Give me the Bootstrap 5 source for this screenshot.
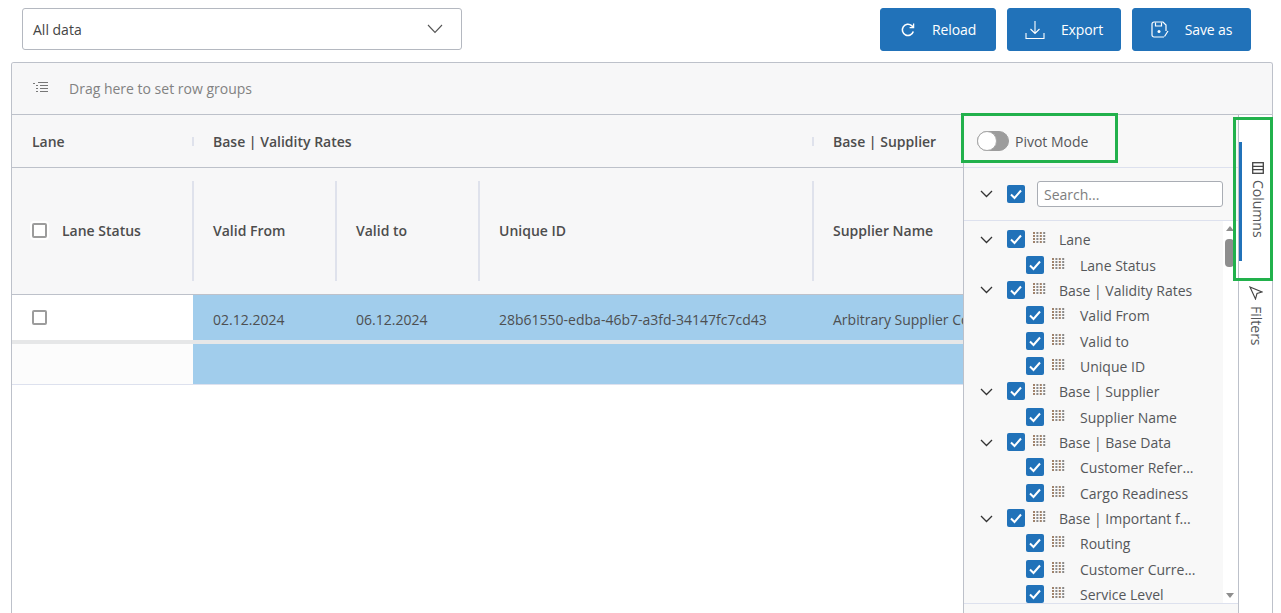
<!DOCTYPE html>
<html lang="en">

<head>
    <meta charset="utf-8" />
    <meta name="viewport" content="width=device-width, initial-scale=1" />
    <title>Lanes</title>
    <link href="https://cdn.jsdelivr.net/npm/bootstrap@5.3.3/dist/css/bootstrap.min.css" rel="stylesheet" />
    <style>
        html, body { height: 613px; overflow: hidden; }
        body { font-family: "Open Sans", "Liberation Sans", sans-serif; font-size: 14px; color: #4a4a4a; background: #fff; position: relative; }

        .top-bar { height: 62px; padding: 8px 22px 0 22px; }
        .view-select { width: 440px; height: 42px; border: 1px solid #b4b8c0; border-radius: 3px; padding: 0 18px 0 10px; color: #444; }
        .act-btn { height: 43px; background: #2172b9; border-color: #2172b9; border-radius: 3px; font-size: 14px; color: #fff; padding: 0; letter-spacing: -.1px; }
        .act-btn svg { flex: none; }
        .btn-reload { width: 116px; }
        .btn-export { width: 114px; margin-left: 11px; }
        .btn-save { width: 119px; margin-left: 11px; margin-right: 8px; }

        .grid-box { margin-left: 11px; width: 1262px; height: 560px; border: 1px solid #bdc1ca; border-bottom: 0; border-radius: 3px 3px 0 0; overflow: hidden; }
        .drop-bar { height: 52px; background: #f7f7f8; border-bottom: 1px solid #bdc1ca; color: #828282; padding-left: 21px; gap: 21px; flex: none; }

        .grid-main { width: 951px; flex: none; overflow: hidden; }
        .head-row { background: #f7f7f8; border-bottom: 1px solid #bdc1ca; font-weight: 600; color: #4d4d4d; flex: none; }
        .group-row { height: 53px; }
        .col-row { height: 127px; }
        .hcell { flex: none; position: relative; padding-left: 20px; padding-bottom: 0; white-space: nowrap; }
        .hcell + .hcell::before { content: ""; position: absolute; left: -1px; width: 2px; background: #dfe2ec; }
        .group-row .hcell + .hcell::before { top: 6px; bottom: 6px; }
        .col-row .hcell + .hcell::before { top: 13px; bottom: 13px; }
        .col-row .hcell { padding-bottom: 2px; }
        .w-lane { width: 181px; }
        .w-date { width: 143px; }
        .w-uid { width: 334px; }
        .w-sup { width: 150px; }
        .w-vgroup { width: 620px; }

        .data-row { height: 45px; white-space: nowrap; flex: none; }
        .row-gap { height: 4px; background: #e6e7e8; flex: none; }
        .empty-row { height: 41px; border-bottom: 1px solid #dde1ee; flex: none; }
        .pin-cell { flex: none; width: 181px; padding-left: 20px; }
        .pin-cell.is-faint { background: #fcfcfc; }
        .blue-cells { background: #a1cdec; flex: 1 1 auto; color: #4d4f51; padding-top: 3px; }
        .blue-cells > div { padding-left: 20px; }
        .blue-cells .w-date, .blue-cells .w-uid { flex: none; }

        .box-empty { width: 15px; height: 15px; border: 2px solid #9c9c9c; border-radius: 2px; background: #fff; flex: none; display: block; }
        .col-row .box-empty { width: 15px; height: 15px; margin-right: 15px; box-shadow: 0 0 0 2px #fff; }

        .tool-panel { width: 275px; flex: none; border-left: 1px solid #bdc1ca; background: #f8f8f8; margin-top: 0; }
        .pivot-row { height: 53px; border-bottom: 1px solid #dde1ee; padding-left: 13px; gap: 6px; color: #55575a; padding-top: 0; flex: none; }
        .toggle-track { width: 32px; height: 20px; border-radius: 10px; background: #9c9c9c; border: 1px solid #9c9c9c; position: relative; flex: none; }
        .toggle-knob { position: absolute; left: -1px; top: -1px; width: 20px; height: 20px; border-radius: 50%; background: #fff; border: 1px solid #a8a8a8; }
        .search-row { height: 53px; border-bottom: 1px solid #dde1ee; padding-left: 16px; flex: none; }
        .search-box { width: 186px; height: 26px; margin-left: 12px; font-size: 14px; padding: 0 6px; border: 1px solid #a9adb4; border-radius: 3px; background: #fff; color: #555; font-family: inherit; }
        .search-box::placeholder { color: #7e7e7e; opacity: 1; }
        .tick-box { width: 18px; height: 18px; background: #2172b9; border-radius: 2px; flex: none; margin-top: -1px; }
        .tick-box svg { display: block; }
        .search-row .tick-box { margin-left: 14px; }
        .search-row .search-box { margin-left: 12px; }

        .tree-wrap { height: 383px; border-bottom: 1px solid #dde1ee; flex: none; position: relative; padding-top: 6px; overflow: hidden; }
        .tree-line { height: 25.37px; white-space: nowrap; color: #55575a; padding-left: 16px; }
        .tree-line.is-child { padding-left: 62px; }
        .tree-line .tick-box { margin-left: 14px; }
        .tree-line.is-child .tick-box { margin-left: 0; }
        .grip { margin-left: 8px; flex: none; margin-top: -3px; }
        .tree-label { margin-left: 13px; }
        .is-child .tree-label { margin-left: 15px; }

        .scroll-strip { position: absolute; right: 0; top: 0; bottom: 0; width: 15px; background: #fff; }
        .scroll-thumb { position: absolute; left: 2px; top: 18px; width: 9px; height: 28px; background: #8e8e8e; border-radius: 4px; }
        .arrow-up, .arrow-down { position: absolute; left: 3px; width: 0; height: 0; border-left: 4px solid transparent; border-right: 4px solid transparent; }
        .arrow-up { top: 5px; border-bottom: 5px solid #8e8e8e; }
        .arrow-down { bottom: 5px; border-top: 5px solid #8e8e8e; }

        .side-tabs { flex: 1 1 auto; border-left: 1px solid #bdc1ca; background: #fff; padding-top: 0; position: relative; }
        .side-tab { writing-mode: vertical-rl; display: flex; align-items: center; gap: 6px; color: #55575a; width: 100%; padding-right: 2px; }
        .tab-columns { height: 119px; margin-top: 27px; padding-top: 20px; border-left: 3px solid #2172b9; padding-left: 4px; }
        .tab-filters { margin-top: 25px; padding-left: 3px; }

        .green-frame { position: absolute; border: 3px solid #22b14c; pointer-events: none; }
        .frame-pivot { left: 961px; top: 113px; width: 157px; height: 50px; }
        .frame-tabs { left: 1233px; top: 117px; width: 40px; height: 164px; }
    </style>
</head>

<body>
    <div class="top-bar d-flex align-items-start justify-content-between">
        <div class="view-select d-flex align-items-center justify-content-between">
            <span>All data</span>
            <svg width="16" height="10" viewBox="0 0 16 10" fill="none" stroke="#555" stroke-width="1.1"><path d="M1 1l7 7.5L15 1" /></svg>
        </div>
        <div class="d-flex">
            <button class="btn act-btn btn-reload d-flex align-items-center justify-content-center gap-3">
                <svg width="16" height="16" viewBox="0 0 16 16" fill="none" stroke="#fff" stroke-width="1.6"><path d="M13.3 9.5A5.6 5.6 0 1 1 11.6 3.6L13.4 5" /><path d="M13.6 1.6v4h-4" stroke-width="1.3" /></svg>
                Reload
            </button>
            <button class="btn act-btn btn-export d-flex align-items-center justify-content-center gap-3">
                <svg width="20" height="20" viewBox="0 0 20 20" fill="none" stroke="#fff" stroke-width="1.1"><path d="M10 1v12M5.5 9l4.5 4.5L14.500 9" /><path d="M1 13v5.500h18V13" /></svg>
                Export
            </button>
            <button class="btn act-btn btn-save d-flex align-items-center justify-content-center gap-3">
                <svg width="18" height="18" viewBox="0 0 18 18" fill="none" stroke="#fff" stroke-width="1.2"><path d="M13 16H3a2 2 0 0 1-2-2V3a2 2 0 0 1 2-2h9l3 3v6" /><path d="M4.500 1.500v3.500h6V1.500" /><circle cx="8" cy="10.500" r="1.500" fill="#fff" stroke="none" /><path d="M17 10l-3.500 5.500" /></svg>
                Save as
            </button>
        </div>
    </div>

    <div class="grid-box d-flex flex-column">
        <div class="drop-bar d-flex align-items-center">
            <svg width="15" height="13" viewBox="0 0 15 13" fill="#777"><rect x="0" y="1" width="2" height="1" /><rect x="5" y="0" width="10" height="1" /><rect x="3" y="3" width="2" height="1" /><rect x="7" y="3" width="8" height="1" /><rect x="3" y="6" width="2" height="1" /><rect x="7" y="6" width="8" height="1" /><rect x="3" y="9" width="2" height="1" /><rect x="7" y="9" width="8" height="1" /></svg>
            <span>Drag here to set row groups</span>
        </div>

        <div class="d-flex flex-grow-1">
            <div class="grid-main d-flex flex-column">
                <div class="head-row group-row d-flex align-items-center">
                    <div class="hcell w-lane">Lane</div>
                    <div class="hcell w-vgroup">Base | Validity Rates</div>
                    <div class="hcell w-sup">Base | Supplier</div>
                </div>
                <div class="head-row col-row d-flex align-items-stretch">
                    <div class="hcell w-lane d-flex align-items-center"><span class="box-empty"></span><span>Lane Status</span></div>
                    <div class="hcell w-date d-flex align-items-center">Valid From</div>
                    <div class="hcell w-date d-flex align-items-center">Valid to</div>
                    <div class="hcell w-uid d-flex align-items-center">Unique ID</div>
                    <div class="hcell w-sup d-flex align-items-center">Supplier Name</div>
                </div>
                <div class="data-row d-flex">
                    <div class="pin-cell d-flex align-items-center"><span class="box-empty"></span></div>
                    <div class="blue-cells d-flex align-items-center">
                        <div class="w-date">02.12.2024</div>
                        <div class="w-date">06.12.2024</div>
                        <div class="w-uid">28b61550-edba-46b7-a3fd-34147fc7cd43</div>
                        <div class="w-sup">Arbitrary Supplier Co</div>
                    </div>
                </div>
                <div class="row-gap"></div>
                <div class="empty-row d-flex">
                    <div class="pin-cell is-faint"></div>
                    <div class="blue-cells"></div>
                </div>
            </div>

            <div class="tool-panel d-flex flex-column">
                <div class="pivot-row d-flex align-items-center">
                    <span class="toggle-track"><span class="toggle-knob"></span></span>
                    <span>Pivot Mode</span>
                </div>
                <div class="search-row d-flex align-items-center">
                    <svg width="13" height="8" viewBox="0 0 13 8" fill="none" stroke="#333" stroke-width="1.3"><path d="M1 1l5.500 5.500L12 1" /></svg>
                    <span class="tick-box" id="searchTick"></span>
                    <input class="search-box" type="text" placeholder="Search..." />
                </div>
                <div class="tree-wrap">
                    <div id="tree"></div>
                    <div class="scroll-strip">
                        <span class="arrow-up"></span>
                        <span class="scroll-thumb"></span>
                        <span class="arrow-down"></span>
                    </div>
                </div>
            </div>

            <div class="side-tabs">
                <div class="side-tab tab-columns">
                    <svg width="12" height="12" viewBox="0 0 12 12" fill="none" stroke="#444" stroke-width="1.3"><rect x=".7" y=".7" width="10.600" height="10.600" /><path d="M.7 4.300h10.600M.7 7.700h10.600" /></svg>
                    <span>Columns</span>
                </div>
                <div class="side-tab tab-filters">
                    <svg width="14" height="14" viewBox="0 0 14 14" fill="none" stroke="#444" stroke-width="1.1"><path d="M1 1l12 5-5 1.500L6.500 13z" /></svg>
                    <span>Filters</span>
                </div>
            </div>
        </div>
    </div>

    <div class="green-frame frame-pivot"></div>
    <div class="green-frame frame-tabs"></div>

    <script>
        const tick = `<svg width="18" height="18" viewBox="0 0 18 18" fill="none" stroke="#fff" stroke-width="2"><path d="M4 9.500l3.500 3.500L14 5.500" /></svg>`;
        const chevron = `<svg width="13" height="8" viewBox="0 0 13 8" fill="none" stroke="#333" stroke-width="1.3"><path d="M1 1l5.500 5.500L12 1" /></svg>`;

        let grip = `<svg class="grip" width="13" height="12" viewBox="0 0 13 12">`;
        for (let r = 0; r < 4; r++) {
            for (let c = 0; c < 4; c++) {
                grip += `<rect x="${c * 3.400}" y="${r * 3}" width="2" height="2" fill="${c % 2 ? '#8a8a8a' : '#a0826a'}" />`;
            }
        }
        grip += `</svg>`;

        const rows = [
            ["Lane", 0], ["Lane Status", 1],
            ["Base | Validity Rates", 0], ["Valid From", 1], ["Valid to", 1], ["Unique ID", 1],
            ["Base | Supplier", 0], ["Supplier Name", 1],
            ["Base | Base Data", 0], ["Customer Refer...", 1], ["Cargo Readiness", 1],
            ["Base | Important f...", 0], ["Routing", 1], ["Customer Curre...", 1], ["Service Level", 1],
        ];

        document.getElementById('searchTick').innerHTML = tick;
        document.getElementById('tree').innerHTML = rows.map(([name, child]) => `
            <div class="tree-line d-flex align-items-center ${child ? 'is-child' : ''}">
                ${child ? '' : chevron}
                <span class="tick-box">${tick}</span>
                ${grip}
                <span class="tree-label">${name}</span>
            </div>`).join('');
    </script>

    <script src="https://cdn.jsdelivr.net/npm/bootstrap@5.3.3/dist/js/bootstrap.bundle.min.js"></script>
</body>

</html>
